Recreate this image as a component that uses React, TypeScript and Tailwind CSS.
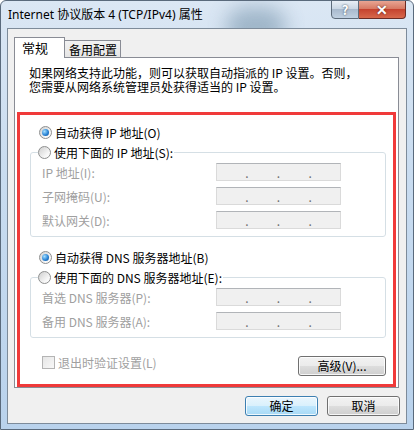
import React from "react";

const cjk = "font-['Noto_Sans_CJK_SC','Noto_Sans',sans-serif]";

const Radio = ({ on }: { on?: boolean }) => (
  <span className="w-[13px] h-[13px] shrink-0 rounded-full border border-[#8e8f8f] bg-[linear-gradient(135deg,#cfcfcf,#f7f7f7_70%,#ffffff)] flex items-center justify-center">
    {on && (
      <span className="w-[7px] h-[7px] rounded-full bg-[radial-gradient(circle_at_35%_35%,#a6e0ff,#2a84d6_55%,#0b4a8c)]" />
    )}
  </span>
);

const IpField = () => (
  <div className="w-[125px] h-[18px] border border-[#dadada] border-t-[#b1b4b8] bg-[#f0f0f0] flex items-end pb-[1px] text-[#6d6d6d] text-[12px] leading-[12px]">
    <span className="flex-1" />
    <span>.</span>
    <span className="flex-1" />
    <span>.</span>
    <span className="flex-1" />
    <span>.</span>
    <span className="flex-1" />
  </div>
);

const FieldRow = ({ label }: { label: string }) => (
  <div className="h-[24px] flex items-center pl-[11px]">
    <span className="w-[174px] text-[#a0a0a0]">{label}</span>
    <IpField />
  </div>
);

const Group = ({ title, rows }: { title: string; rows: string[] }) => (
  <fieldset className="ml-[10px] w-[356px] border border-[#d5dfe5] rounded-[3px] pb-[4px]">
    <legend className="ml-[7px] h-[16px] flex items-center gap-[3px] pr-[1px]">
      <Radio />
      <span>{title}</span>
    </legend>
    {rows.map((r) => (
      <FieldRow key={r} label={r} />
    ))}
  </fieldset>
);

const WinButton = ({ children, primary, className }: { children: React.ReactNode; primary?: boolean; className?: string }) => (
  <button
    className={`h-[20px] rounded-[3px] border text-[12px] leading-[18px] text-black shadow-[inset_0_0_0_1px_rgba(255,255,255,0.8)] ${
      primary
        ? "border-[#3c7fb1] bg-[linear-gradient(#eaf6fd,#d9f0fc_50%,#bee6fd_50%,#a7d9f5)]"
        : "border-[#707070] bg-[linear-gradient(#f2f2f2,#ebebeb_50%,#dddddd_50%,#cfcfcf)]"
    } ${className ?? ""}`}
  >
    {children}
  </button>
);

export default function App() {
  return (
    <div
      className={`relative w-[414px] h-[430px] overflow-hidden bg-[linear-gradient(#dbe7f4,#c9dcf0_40%,#b9d2ec)] border border-[#5a6a7c] rounded-t-[6px] ${cjk} text-[12px] leading-[13px] text-black`}
    >
      {/* glass blur behind caption */}
      <div className="absolute left-[225px] top-[6px] w-[60px] h-[40px] rounded-full bg-[#4a6f8a] opacity-40 blur-[10px]" />

      {/* title bar */}
      <div className="relative h-[27px] flex items-start justify-between">
        <span className="pl-[7px] pt-[7px] text-[12px] leading-[14px] font-['Noto_Sans','Noto_Sans_CJK_SC',sans-serif]">
          Internet 协议版本 4 (TCP/IPv4) 属性
        </span>
        <div className="flex mr-[7px] -mt-px">
          <div className="w-[28px] h-[19px] rounded-bl-[4px] border border-[#5d6b7a] bg-[linear-gradient(#e8eef5,#c7d4e2_50%,#a9bacd_50%,#c0d0e1)] flex items-center justify-center text-white font-bold text-[13px] [text-shadow:0_0_2px_#2a3a4a]">
            ?
          </div>
          <div className="w-[47px] h-[19px] rounded-br-[4px] border border-l-0 border-[#6b2b24] bg-[linear-gradient(#e8a593,#d77a64_45%,#c5432f_50%,#d7684c)] flex items-center justify-center text-white font-bold text-[14px] [text-shadow:0_0_2px_#4a1a10]">
            ✕
          </div>
        </div>
      </div>

      {/* client area */}
      <div className="relative ml-[6px] w-[400px] h-[396px] border border-[#7d8b9a] bg-[#f0f0f0] pl-[6px] pt-[8px]">
        {/* tabs */}
        <div className="flex items-end h-[20px]">
          <div className="relative z-10 w-[51px] h-[21px] -mb-px border border-b-0 border-[#898c95] bg-white pl-[7px] pt-[3px] text-[13px] leading-[14px]">
            常规
          </div>
          <div className="w-[56px] h-[17px] border border-l-0 border-b-0 border-[#898c95] bg-[linear-gradient(#f2f2f2,#e5e5e5)] pl-[4px] pt-[2px]">
            备用配置
          </div>
        </div>

        {/* page */}
        <div className="w-[385px] h-[331px] border border-[#898c95] bg-white">
          <p className="pl-[14px] pt-[8px] leading-[14px]">
            如果网络支持此功能，则可以获取自动指派的 IP 设置。否则，
            <br />
            您需要从网络系统管理员处获得适当的 IP 设置。
          </p>

          <div className="mt-[18px] mx-[2px] h-[275px] border-[3px] border-[#f03a3a] pt-[9px]">
            <div className="h-[16px] flex items-center gap-[3px] pl-[19px]">
              <Radio on />
              <span>自动获得 IP 地址(O)</span>
            </div>

            <div className="mt-[4px]">
              <Group title="使用下面的 IP 地址(S):" rows={["IP 地址(I):", "子网掩码(U):", "默认网关(D):"]} />
            </div>

            <div className="mt-[12px] h-[16px] flex items-center gap-[3px] pl-[19px]">
              <Radio on />
              <span>自动获得 DNS 服务器地址(B)</span>
            </div>

            <div className="mt-[4px]">
              <Group title="使用下面的 DNS 服务器地址(E):" rows={["首选 DNS 服务器(P):", "备用 DNS 服务器(A):"]} />
            </div>

            <div className="mt-[18px] flex items-start justify-between pl-[22px] pr-[7px]">
              <div className="flex items-start gap-[3px]">
                <span className="w-[13px] h-[13px] border border-[#b4b4b4] bg-[linear-gradient(135deg,#e6e6e6,#f8f8f8)]" />
                <span className="text-[#a0a0a0] leading-[13px]">退出时验证设置(L)</span>
              </div>
              <WinButton className="w-[88px]">高级(V)...</WinButton>
            </div>
          </div>
        </div>

        {/* dialog buttons */}
        <div className="mt-[8px] flex justify-end gap-[9px] pr-[6px]">
          <WinButton primary className="w-[73px]">确定</WinButton>
          <WinButton className="w-[73px]">取消</WinButton>
        </div>
      </div>
    </div>
  );
}
